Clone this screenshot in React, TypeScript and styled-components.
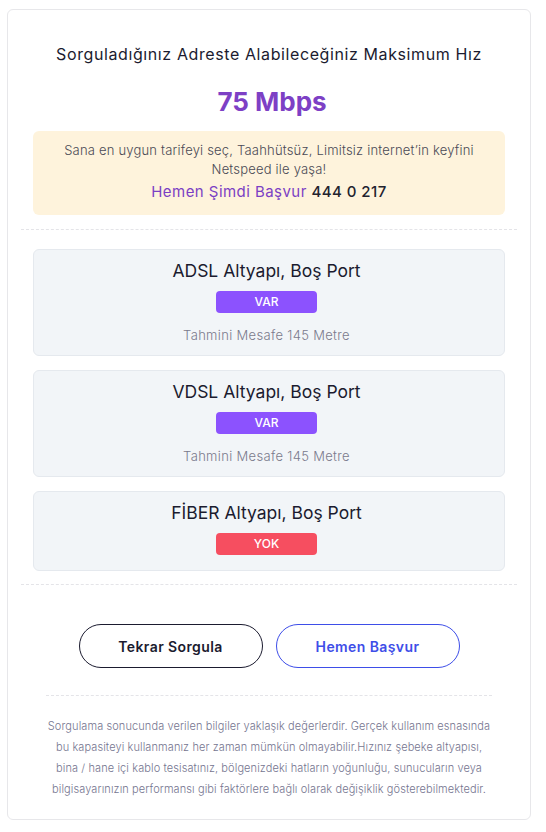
import React from "react";
import styled, { createGlobalStyle } from "styled-components";

const GlobalStyle = createGlobalStyle`
  html, body {
    margin: 0;
    padding: 0;
    background: #ffffff;
  }
  body {
    font-family: "Inter", "Noto Sans", sans-serif;
    color: #1b1b2f;
  }
  * {
    box-sizing: border-box;
  }
`;

const Card = styled.div`
  width: 524px;
  margin: 9px 0 0 7px;
  padding: 32px 25px 19px;
  border: 1px solid #e7e7ea;
  border-radius: 6px;
  background: #fff;
`;

const Title = styled.h1`
  margin: 0;
  font-size: 16px;
  line-height: 24px;
  font-weight: 400;
  letter-spacing: 0.6px;
  text-align: center;
  color: #1b1b2f;
`;

const Speed = styled.div`
  margin-top: 18px;
  padding-left: 6px;
  font-size: 26px;
  line-height: 36px;
  font-weight: 700;
  text-align: center;
  color: #7d40c5;
`;

const Promo = styled.div`
  margin-top: 11px;
  padding: 10px 20px 11px;
  background: #fef3dc;
  border-radius: 6px;
  text-align: center;
`;

const PromoText = styled.p`
  margin: 0;
  font-size: 13px;
  line-height: 19px;
  font-weight: 300;
  letter-spacing: 0.2px;
  color: #4a4a55;
`;

const PromoCall = styled.div`
  margin-top: 1px;
  font-size: 15px;
  line-height: 24px;
  letter-spacing: 0.45px;
`;

const PromoLink = styled.span`
  color: #7b3fc4;
`;

const Phone = styled.span`
  color: #22222e;
  font-weight: 500;
`;

const Divider = styled.hr<{ $top?: number; $inset?: number }>`
  margin: ${(p) => `${p.$top ?? 14}px ${p.$inset ?? -12}px 0`};
  border: 0;
  border-top: 1px dashed #e4e4e8;
  height: 0;
`;

const List = styled.div`
  display: flex;
  flex-direction: column;
  gap: 14px;
  margin-top: 19px;
`;

const Infra = styled.div`
  display: flex;
  flex-direction: column;
  align-items: center;
  padding: 8px 21px 10px 16px;
  background: #f2f5f8;
  border: 1px solid #e5e9ee;
  border-radius: 6px;
`;

const InfraTitle = styled.div`
  font-size: 17.5px;
  line-height: 26px;
  font-weight: 400;
  color: #1b1b2f;
`;

const Badge = styled.div<{ $ok: boolean }>`
  margin-top: 7px;
  margin-bottom: 5px;
  width: 101px;
  height: 22px;
  border-radius: 4px;
  background: ${(p) => (p.$ok ? "#8c52fe" : "#f64e60")};
  color: #fff;
  font-size: 12px;
  font-weight: 500;
  line-height: 22px;
  text-align: center;
`;

const Distance = styled.div`
  margin-top: 7px;
  font-size: 13px;
  line-height: 20px;
  font-weight: 300;
  letter-spacing: 0.33px;
  color: #7a7a8c;
`;

const Actions = styled.div`
  display: flex;
  justify-content: center;
  gap: 13px;
  margin-top: 39px;
`;

const Button = styled.button<{ $primary?: boolean }>`
  width: 184px;
  height: 44px;
  border-radius: 22px;
  background: #fff;
  border: 1px solid ${(p) => (p.$primary ? "#3e4ee8" : "#1b1b2f")};
  color: ${(p) => (p.$primary ? "#3e4ee8" : "#1b1b2f")};
  font-family: inherit;
  font-size: 14px;
  font-weight: 600;
  letter-spacing: 0.4px;
  cursor: pointer;
`;

const Note = styled.p`
  margin: 20px -10px 0;
  font-size: 11px;
  line-height: 21px;
  font-weight: 300;
  letter-spacing: 0.1px;
  text-align: center;
  color: #75758f;
`;

const rows = [
  { name: "ADSL Altyapı, Boş Port", ok: true, distance: "Tahmini Mesafe 145 Metre" },
  { name: "VDSL Altyapı, Boş Port", ok: true, distance: "Tahmini Mesafe 145 Metre" },
  { name: "FİBER Altyapı, Boş Port", ok: false },
];

export default function App() {
  return (
    <>
      <GlobalStyle />
      <Card>
        <Title>Sorguladığınız Adreste Alabileceğiniz Maksimum Hız</Title>
        <Speed>75 Mbps</Speed>
        <Promo>
          <PromoText>
            Sana en uygun tarifeyi seç, Taahhütsüz, Limitsiz internet’in keyfini
            <br />
            Netspeed ile yaşa!
          </PromoText>
          <PromoCall>
            <PromoLink>Hemen Şimdi Başvur</PromoLink> <Phone>444 0 217</Phone>
          </PromoCall>
        </Promo>
        <Divider />
        <List>
          {rows.map((r) => (
            <Infra key={r.name}>
              <InfraTitle>{r.name}</InfraTitle>
              <Badge $ok={r.ok}>{r.ok ? "VAR" : "YOK"}</Badge>
              {r.distance && <Distance>{r.distance}</Distance>}
            </Infra>
          ))}
        </List>
        <Divider $top={13} />
        <Actions>
          <Button>Tekrar Sorgula</Button>
          <Button $primary>Hemen Başvur</Button>
        </Actions>
        <Divider $top={27} $inset={13} />
        <Note>
          Sorgulama sonucunda verilen bilgiler yaklaşık değerlerdir. Gerçek kullanım esnasında
          <br />
          bu kapasiteyi kullanmanız her zaman mümkün olmayabilir.Hızınız şebeke altyapısı,
          <br />
          bina / hane içi kablo tesisatınız, bölgenizdeki hatların yoğunluğu, sunucuların veya
          <br />
          bilgisayarınızın performansı gibi faktörlere bağlı olarak değişiklik gösterebilmektedir.
        </Note>
      </Card>
    </>
  );
}
